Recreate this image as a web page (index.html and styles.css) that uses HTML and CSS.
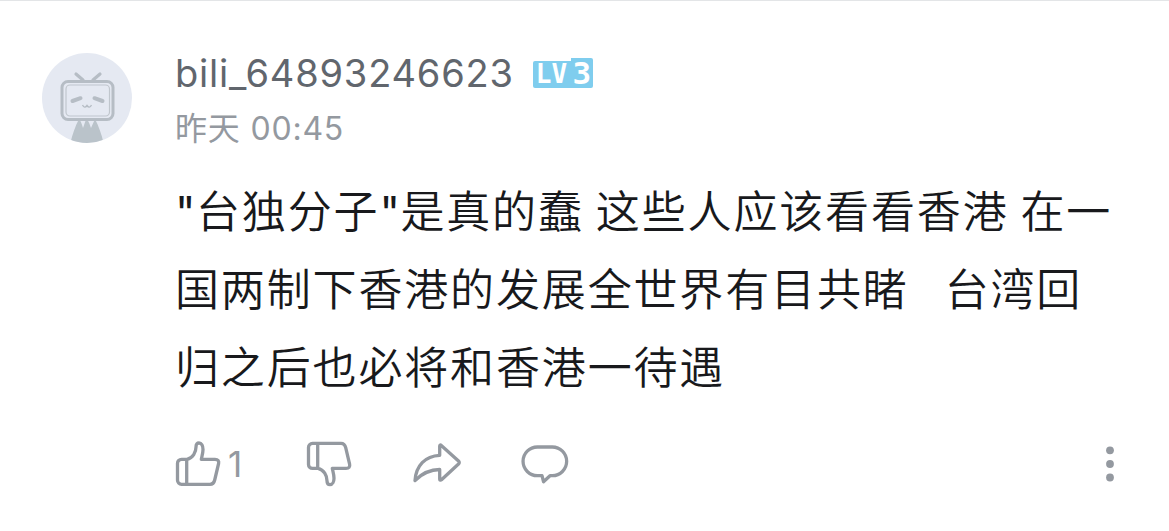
FILE: index.html
```html
<!DOCTYPE html>
<html lang="zh">

<head>
  <meta charset="utf-8">
  <title>Comment</title>
  <meta name="viewport" content="width=device-width, initial-scale=1">
  <link rel="stylesheet" href="styles.css">
</head>

<body>
  <div class="comment">
    <!-- Avatar -->
    <svg class="avatar" viewBox="0 0 90 90">
      <defs>
        <clipPath id="circle"><circle cx="45" cy="45" r="45" /></clipPath>
      </defs>
      <circle cx="45" cy="45" r="45" fill="#e5e9f2" />
      <g clip-path="url(#circle)">
        <path d="M28 92C30 82 33 74 37 66Q39 68 41 75L44.500 65Q47 69 49 75L53 66C57 74 60 82 62 92Z" fill="#bac3ca" />
        <path d="M34 21L41 27M58 21L51 27" stroke="#b6bdc5" stroke-width="3.200" stroke-linecap="round" />
        <rect x="20" y="28.500" width="51" height="38" rx="6" fill="#e5e9f2" stroke="#b6bdc5" stroke-width="3" />
        <rect x="24" y="32" width="43.500" height="31" rx="4" fill="none" stroke="#c0c6cd" stroke-width="1.200" />
        <path d="M30.500 48L38.500 45.200M52.500 45.200L60.500 48" fill="none" stroke="#b6bdc5" stroke-width="4" stroke-linecap="round" />
        <path d="M40.500 52Q42.500 56 45 52.500Q47.500 56 49.500 52" fill="none" stroke="#b6bdc5" stroke-width="1.400" />
      </g>
    </svg>

    <div class="main">
      <div class="user">
        <span class="name">bili_64893246623</span>
        <span class="level"><span class="level-lv">LV</span><span class="level-num">3</span></span>
      </div>
      <div class="time">昨天 00:45</div>

      <p class="text"><span class="quote">"</span>台独分子<span class="quote">"</span>是真的蠢 这些人应该看看香港 在一<br>国两制下香港的发展全世界有目共睹&nbsp;&nbsp; 台湾回<br>归之后也必将和香港一待遇</p>

      <!-- Actions -->
      <div class="actions">
        <div class="action like">
          <svg class="icon" viewBox="0 0 48 48">
            <path d="M12.700 19.300V44.300M7.500 19.300H13C19 18 22 12 22 7C22 4 23.300 3 25 3C27.500 3 29 6 29 9.500C29 13 28 16 27.300 19.300H41C44 19.300 45.200 21 44.600 23.500L40.700 40C40 43 38.500 44.300 36 44.300H7.500A4 4 0 0 1 3.500 40.300V23.300A4 4 0 0 1 7.500 19.300Z" />
          </svg>
          <span class="count">1</span>
        </div>
        <div class="action dislike">
          <svg class="icon" viewBox="0 0 48 48">
            <path d="M12.700 28.400V3.400M7.500 28.400H13C19 29.700 22 35.700 22 40.700C22 43.700 23.300 44.700 25 44.700C27.500 44.700 29 41.700 29 38.200C29 34.700 28 31.700 27.300 28.400H41C44 28.400 45.200 26.700 44.600 24.200L40.700 7.700C40 4.700 38.500 3.400 36 3.400H7.500A4 4 0 0 0 3.500 7.400V24.400A4 4 0 0 0 7.500 28.400Z" />
          </svg>
        </div>
        <div class="action share">
          <svg class="icon wide" viewBox="0 0 50 48">
            <path d="M3 40.500C4 26 13 15.800 27.700 15.300V6C27.700 5 28.500 4.700 29.300 5.400L46.500 21Q48 22.500 46.500 24L29.500 39.800C28.700 40.500 27.700 40.300 27.700 39.200V29.500C17 29.500 9 34.500 3 40.500Z" />
          </svg>
        </div>
        <div class="action">
          <svg class="icon wide" viewBox="0 0 50 48">
            <path d="M17.400 7H32.300A14.350 14.350 0 0 1 32.300 35.700H30L23.500 41.700L22 35.700H17.400A14.350 14.350 0 0 1 17.400 7Z" />
          </svg>
        </div>
        <svg class="more" viewBox="0 0 8 36">
          <circle cx="4" cy="4.300" r="3.900" />
          <circle cx="4" cy="18" r="3.900" />
          <circle cx="4" cy="31.500" r="3.900" />
        </svg>
      </div>
    </div>
  </div>
</body>

</html>
```
FILE: styles.css
```css
body {
  margin: 0;
  background-color: #fff;
  font-family: Inter, "Noto Sans CJK TC", sans-serif;
}

.comment {
  display: flex;
  box-sizing: border-box;
  height: 531px;
  padding: 52px 55px 0 42px;
  border-top: 1px solid #e3e5e7;
}

.avatar {
  flex: none;
  width: 90px;
  height: 90px;
  margin-right: 43px;
}

.main {
  flex: 1;
  min-width: 0;
}

.user {
  display: flex;
  align-items: center;
  height: 40px;
}

.name {
  color: #61666d;
  font-size: 38px;
  line-height: 42px;
  letter-spacing: 0.8px;
}

.level {
  display: flex;
  align-items: flex-end;
  width: 60px;
  height: 30px;
  margin-left: 19px;
  color: #fff;
  font-family: "DejaVu Sans Mono", monospace;
  font-weight: bold;
}

.level-lv {
  box-sizing: border-box;
  width: 38px;
  height: 27px;
  padding-left: 3px;
  background-color: #7fcdee;
  border-radius: 2px 0 0 2px;
  font-size: 26px;
  line-height: 26px;
}

.level-num {
  width: 22px;
  height: 30px;
  background-color: #7fcdee;
  border-radius: 0 2px 2px 0;
  font-size: 31px;
  line-height: 30px;
  text-align: center;
}

.time {
  margin-top: 16px;
  color: #9499a0;
  font-size: 32px;
  line-height: 40px;
  letter-spacing: 0.8px;
}

.text {
  margin: 24px 0 0;
  color: #18191c;
  font-size: 44px;
  font-weight: 350;
  line-height: 78px;
  letter-spacing: 1.85px;
  word-spacing: -2.2px;
  white-space: nowrap;
}

.quote {
  font-weight: 400;
  letter-spacing: 0.5px;
}

.actions {
  display: flex;
  align-items: center;
  height: 48px;
  margin: 33px 0 0 -1px;
}

.action {
  display: flex;
  align-items: center;
}

.icon {
  width: 48px;
  height: 48px;
  fill: none;
  stroke: #9499a0;
  stroke-width: 3.3;
  stroke-linejoin: round;
}

.icon.wide {
  width: 50px;
}

.like {
  width: 131px;
}

.dislike {
  width: 107px;
}

.share {
  width: 108px;
}

.count {
  margin-left: 6px;
  color: #9499a0;
  font-size: 35px;
}

.more {
  width: 8px;
  height: 36px;
  margin-left: auto;
  fill: #9499a0;
}
```
